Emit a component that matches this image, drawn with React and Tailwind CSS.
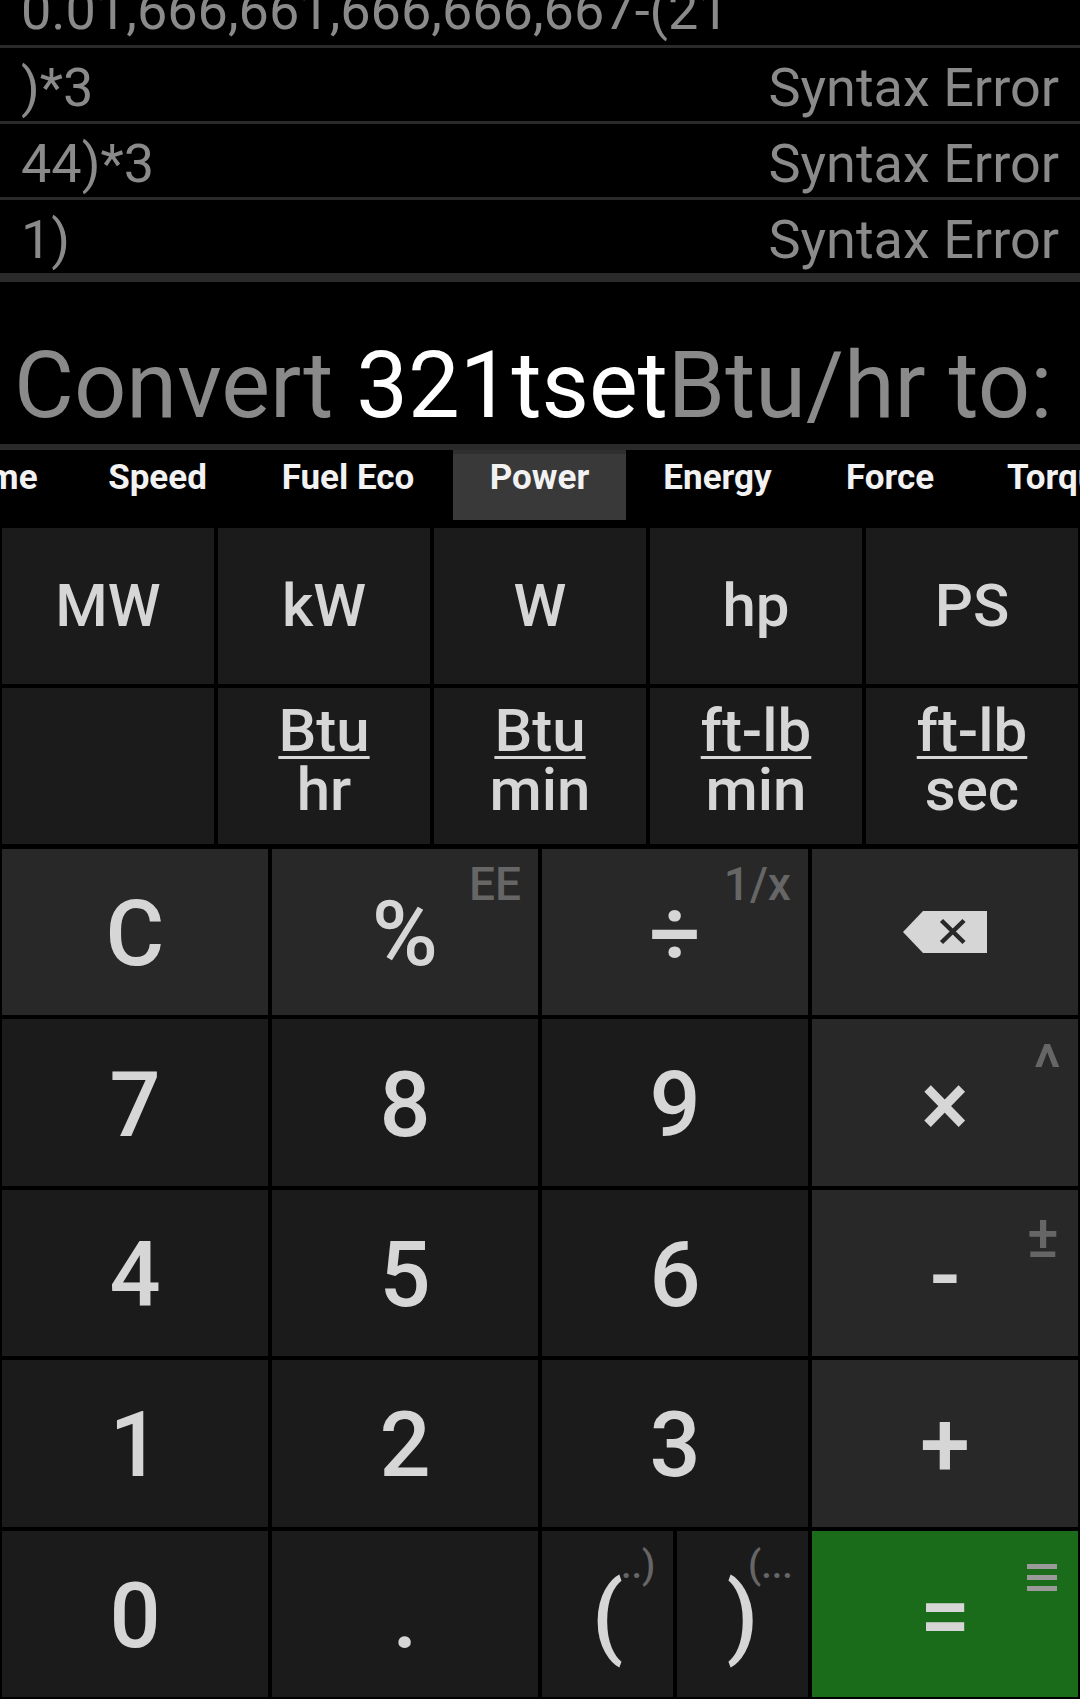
import React from "react";

function HistoryRow({ left, right, first }) {
  return (
    <div
      className={`shrink-0 h-[76px] flex items-center justify-between px-[21px] pt-[6px] text-[54px] leading-[73px] text-[#8a8a8a] whitespace-nowrap ${first ? "" : "border-t-[3px] border-[#2a2a2a]"}`}
    >
      <span>{left}</span>
      {right ? <span>{right}</span> : null}
    </div>
  );
}

function Tab({ w, children, active, start }) {
  return (
    <div
      className={`shrink-0 h-[70px] flex text-[35px] font-bold leading-none text-[#f2f2f2] ${start ? "justify-start pl-[36px]" : "justify-center"} ${active ? "bg-[#393939] border-t-[4px] border-[#2f2f2f] pt-[6px]" : "pt-[10px]"}`}
      style={{ width: w }}
    >
      {children}
    </div>
  );
}

function Unit({ children }) {
  return (
    <div className="bg-[#1b1b1b] flex items-center justify-center text-[60px] font-medium leading-none text-[#d6d6d6]">
      {children}
    </div>
  );
}

function Frac({ top, bottom }) {
  return (
    <div className="bg-[#1b1b1b] flex flex-col items-center pt-[13px] text-[60px] font-medium leading-[59px] text-[#d6d6d6]">
      <span className="underline decoration-3 underline-offset-[5px]">{top}</span>
      <span>{bottom}</span>
    </div>
  );
}

function Key({ children, op, green }) {
  const bg = green ? "bg-[#1a6b1a]" : op ? "bg-[#282828]" : "bg-[#1b1b1b]";
  return (
    <div
      className={`relative flex items-center justify-center pt-[6px] text-[90px] font-medium leading-none text-[#d6d6d6] ${bg}`}
    >
      {children}
    </div>
  );
}

function Hint({ children, className }) {
  return (
    <span className={`absolute font-medium leading-none text-[#666666] ${className}`}>
      {children}
    </span>
  );
}

export default function App() {
  return (
    <div className="w-[1080px] h-[1699px] bg-black flex flex-col overflow-hidden font-[Roboto,'Noto_Sans',sans-serif]">
      {/* history */}
      <div className="h-[273px] shrink-0 flex flex-col justify-end overflow-hidden">
        <HistoryRow first left="0.01,666,661,666,666,667-(21" />
        <HistoryRow left=")*3" right="Syntax Error" />
        <HistoryRow left="44)*3" right="Syntax Error" />
        <HistoryRow left="1)" right="Syntax Error" />
      </div>
      <div className="h-[9px] shrink-0 bg-[#2a2a2a]" />

      {/* convert line */}
      <div className="h-[162px] shrink-0 pl-[14px] pt-[58px] text-[92px] leading-none whitespace-nowrap text-[#8a8a8a]">
        Convert <span className="text-white">321tset</span>Btu/hr to:
      </div>
      <div className="h-[6px] shrink-0 bg-[#2a2a2a]" />

      {/* tabs */}
      <div className="h-[78px] shrink-0 flex overflow-hidden whitespace-nowrap">
        <div className="flex ml-[-77px]">
          <Tab w={149}>Time</Tab>
          <Tab w={171}>Speed</Tab>
          <Tab w={210}>Fuel Eco</Tab>
          <Tab w={173} active>Power</Tab>
          <Tab w={183}>Energy</Tab>
          <Tab w={162}>Force</Tab>
          <Tab w={200} start>Torque</Tab>
        </div>
      </div>

      {/* unit grid */}
      <div className="shrink-0 px-[2px] grid grid-cols-5 grid-rows-[156px_156px] gap-[4px]">
        <Unit>MW</Unit>
        <Unit>kW</Unit>
        <Unit>W</Unit>
        <Unit>hp</Unit>
        <Unit>PS</Unit>
        <div className="bg-[#1b1b1b]" />
        <Frac top="Btu" bottom="hr" />
        <Frac top="Btu" bottom="min" />
        <Frac top="ft-lb" bottom="min" />
        <Frac top="ft-lb" bottom="sec" />
      </div>

      {/* keypad */}
      <div className="flex-1 mt-[5px] px-[2px] pb-[2px] grid grid-cols-4 grid-rows-5 gap-[4px]">
        <Key op>C</Key>
        <Key op>
          %
          <Hint className="top-[12px] right-[17px] text-[46px]">EE</Hint>
        </Key>
        <Key op>
          ÷
          <Hint className="top-[12px] right-[17px] text-[46px]">1/x</Hint>
        </Key>
        <div className="bg-[#282828] flex items-center justify-center">
          <svg width="84" height="42" viewBox="0 0 84 42">
            <path d="M0 21 L20 0 H84 V42 H20 Z" fill="#d6d6d6" />
            <path d="M38.5 9.5 L61 31.5 M61 9.5 L38.5 31.5" stroke="#282828" strokeWidth="4.5" />
          </svg>
        </div>

        <Key>7</Key>
        <Key>8</Key>
        <Key>9</Key>
        <Key op>
          ×
          <Hint className="top-[18px] right-[17px] text-[64px]">^</Hint>
        </Key>

        <Key>4</Key>
        <Key>5</Key>
        <Key>6</Key>
        <Key op>
          -
          <Hint className="top-[17px] right-[19px] text-[60px]">±</Hint>
        </Key>

        <Key>1</Key>
        <Key>2</Key>
        <Key>3</Key>
        <Key op>+</Key>

        <Key>0</Key>
        <Key>.</Key>
        <div className="grid grid-cols-2 gap-[4px]">
          <Key>
            (
            <Hint className="top-[15px] left-[79px] text-[38px]">..)</Hint>
          </Key>
          <Key>
            )
            <Hint className="top-[15px] left-[71px] text-[38px]">(...</Hint>
          </Key>
        </div>
        <Key green>
          =
          <span className="absolute top-[33px] right-[21px] flex flex-col gap-[6px]">
            <span className="block w-[30px] h-[5px] bg-[#9a9a9a]" />
            <span className="block w-[30px] h-[5px] bg-[#9a9a9a]" />
            <span className="block w-[30px] h-[5px] bg-[#9a9a9a]" />
          </span>
        </Key>
      </div>
    </div>
  );
}
